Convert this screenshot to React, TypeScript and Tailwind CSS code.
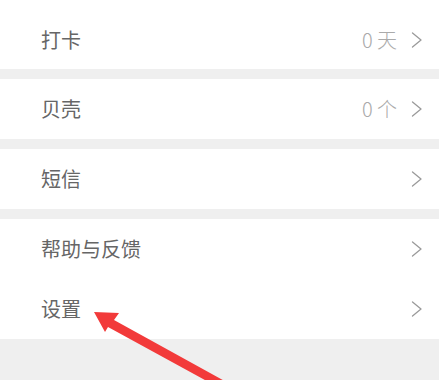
import React from "react";

type Row = {
  label: string;
  value?: string;
};

const groups: Row[][] = [
  [{ label: "打卡", value: "0 天" }],
  [{ label: "贝壳", value: "0 个" }],
  [{ label: "短信" }],
  [{ label: "帮助与反馈" }, { label: "设置" }],
];

function Chevron() {
  return (
    <svg width="12" height="16" viewBox="0 0 12 16" fill="none" className="shrink-0">
      <path d="M1.5 1 L10 8 L1.5 15" stroke="#9a9a9a" strokeWidth="1.3" strokeLinejoin="round" strokeLinecap="round" />
    </svg>
  );
}

function MenuRow({ row, first }: { row: Row; first?: boolean }) {
  return (
    <div className={`flex items-center pl-[41px] pr-[16px] ${first ? "h-[69px] pt-[10px]" : "h-[60px]"}`}>
      <span className="flex-1 text-[20px] text-[#666666]">{row.label}</span>
      {row.value && <span className="mr-[14px] text-[20px] font-light text-[#aaaaaa]">{row.value}</span>}
      <Chevron />
    </div>
  );
}

export default function App() {
  return (
    <div
      className="relative h-[380px] w-[439px] overflow-hidden bg-[#efefef]"
      style={{ fontFamily: '"Noto Sans CJK SC", "Noto Sans", sans-serif' }}
    >
      <div className="flex flex-col gap-[10px]">
        {groups.map((g, i) => (
          <div key={i} className="bg-white">
            {g.map((row, j) => (
              <MenuRow key={row.label} row={row} first={i === 0 && j === 0} />
            ))}
          </div>
        ))}
      </div>

      {/* red annotation arrow */}
      <svg className="pointer-events-none absolute inset-0" width="439" height="380" viewBox="0 0 439 380">
        <polygon points="94,312 119,313 114,320 230,384 225,391 108,327 105,332" fill="#f23a3a" />
      </svg>
    </div>
  );
}
